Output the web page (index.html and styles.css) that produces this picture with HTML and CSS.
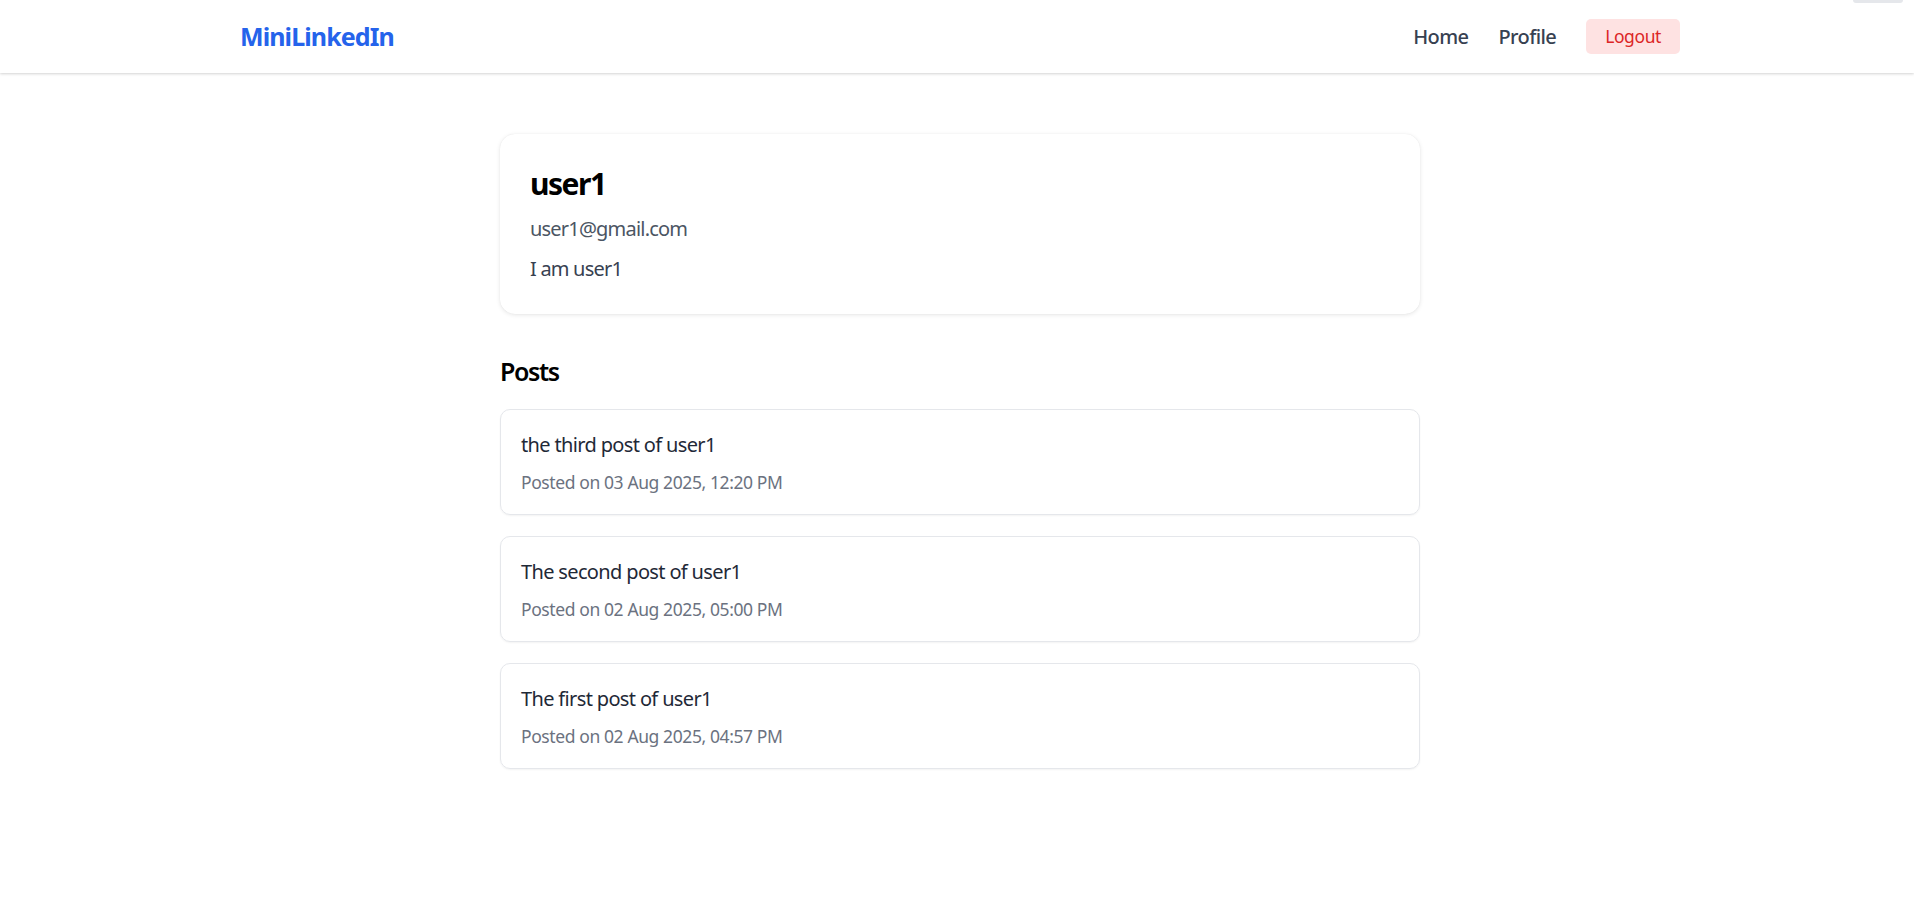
FILE: index.html
```html
<!DOCTYPE html>
<html lang="en">
<head>
<meta charset="utf-8">
<title>MiniLinkedIn</title>
<link rel="stylesheet" href="styles.css">
</head>
<body>
<div class="corner-tab"></div>
<nav class="navbar">
  <div class="nav-inner">
    <a class="logo" href="#">MiniLinkedIn</a>
    <div class="nav-links">
      <a class="nav-link" href="#">Home</a>
      <a class="nav-link" href="#">Profile</a>
      <button class="logout">Logout</button>
    </div>
  </div>
</nav>
<main class="main">
  <section class="profile-card">
    <h1 class="profile-name">user1</h1>
    <p class="profile-email">user1@gmail.com</p>
    <p class="profile-bio">I am user1</p>
  </section>
  <h2 class="posts-title">Posts</h2>
  <div class="posts">
    <article class="post-card">
      <p class="post-text">the third post of user1</p>
      <p class="post-date">Posted on 03 Aug 2025, 12:20 PM</p>
    </article>
    <article class="post-card">
      <p class="post-text">The second post of user1</p>
      <p class="post-date">Posted on 02 Aug 2025, 05:00 PM</p>
    </article>
    <article class="post-card">
      <p class="post-text">The first post of user1</p>
      <p class="post-date">Posted on 02 Aug 2025, 04:57 PM</p>
    </article>
  </div>
</main>
</body>
</html>
```
FILE: styles.css
```css
* { box-sizing: border-box; }
html, body { margin: 0; padding: 0; }
body {
  font-family: "Noto Sans", "Open Sans", sans-serif;
  background: #ffffff;
  color: #000;
  min-height: 905px;
}
.corner-tab {
  position: absolute;
  top: 0;
  right: 11px;
  width: 50px;
  height: 3px;
  background: #e5e7eb;
  border-radius: 0 0 6px 6px;
}
.navbar {
  background: #fff;
  box-shadow: 0 1px 3px rgba(0,0,0,0.12), 0 1px 2px rgba(0,0,0,0.06);
}
.nav-inner {
  width: 1440px;
  margin-left: calc(50% - 717px);
  height: 73px;
  display: flex;
  align-items: center;
  justify-content: space-between;
}
.logo {
  font-size: 25px;
  line-height: 35px;
  font-weight: 700;
  letter-spacing: -0.9px;
  color: #2563eb;
  text-decoration: none;
}
.nav-links {
  display: flex;
  align-items: center;
  gap: 30px;
}
.nav-link {
  font-size: 20px;
  line-height: 30px;
  font-weight: 500;
  letter-spacing: -0.6px;
  color: #374151;
  text-decoration: none;
}
.logout {
  font-family: inherit;
  font-size: 17.5px;
  line-height: 25px;
  letter-spacing: -0.4px;
  padding: 5px 19px;
  border: none;
  border-radius: 5px;
  background: #fee2e2;
  color: #dc2626;
}
.main {
  width: 920px;
  margin-left: calc(50% - 457px);
  padding-top: 61px;
}
.profile-card {
  background: #fff;
  border-radius: 15px;
  padding: 30px;
  box-shadow: 0 1px 4px rgba(0,0,0,0.1), 0 0 1px rgba(0,0,0,0.08);
}
.profile-name {
  margin: 0 0 10px;
  font-size: 30px;
  line-height: 40px;
  font-weight: 700;
  letter-spacing: -1.5px;
  color: #000;
}
.profile-email {
  margin: 0 0 10px;
  font-size: 20px;
  line-height: 30px;
  letter-spacing: -0.8px;
  color: #4b5563;
}
.profile-bio {
  margin: 0;
  font-size: 20px;
  line-height: 30px;
  letter-spacing: -0.8px;
  color: #374151;
}
.posts-title {
  margin: 40px 0 20px;
  font-size: 25px;
  line-height: 35px;
  font-weight: 600;
  letter-spacing: -1.4px;
  color: #000;
}
.posts {
  display: flex;
  flex-direction: column;
  gap: 21px;
}
.post-card {
  border: 1px solid #e5e7eb;
  border-radius: 10px;
  padding: 20px 20px 19px;
  box-shadow: 0 1px 2px rgba(0,0,0,0.05);
}
.post-text {
  margin: 0 0 10px;
  font-size: 20px;
  line-height: 30px;
  letter-spacing: -0.65px;
  color: #1f2937;
}
.post-date {
  margin: 0;
  font-size: 17.5px;
  line-height: 25px;
  letter-spacing: -0.4px;
  color: #6b7280;
}
```
